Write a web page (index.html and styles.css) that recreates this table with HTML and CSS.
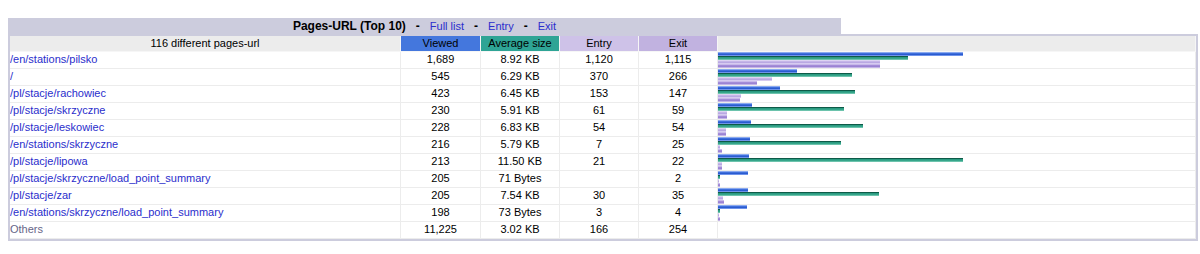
FILE: index.html
```html
<!DOCTYPE html>
<html>
<head>
<meta charset="utf-8">
<title>Pages-URL (Top 10)</title>
<link rel="stylesheet" href="styles.css">
</head>
<body>
<div class="stats">
  <div class="title-row">
    <div class="title">
      <span>Pages-URL (Top 10)</span>
      <span class="sep">-</span>
      <a href="#">Full list</a>
      <span class="sep">-</span>
      <a href="#">Entry</a>
      <span class="sep">-</span>
      <a href="#">Exit</a>
    </div>
    <div class="blank"></div>
  </div>
  <div class="frame">
    <div class="row head">
      <div class="cell h-first">116 different pages-url</div>
      <div class="cell h-p">Viewed</div>
      <div class="cell h-k">Average size</div>
      <div class="cell h-e">Entry</div>
      <div class="cell h-x">Exit</div>
      <div class="cell h-bar"></div>
    </div>

    <div class="row">
      <div class="cell url"><a href="#">/en/stations/pilsko</a></div>
      <div class="cell">1,689</div><div class="cell">8.92 KB</div><div class="cell">1,120</div><div class="cell">1,115</div>
      <div class="cell bars"><div class="bar p" style="width:245px"></div><div class="bar k" style="width:190px"></div><div class="bar e" style="width:162px"></div><div class="bar x" style="width:162px"></div></div>
    </div>
    <div class="row">
      <div class="cell url"><a href="#">/</a></div>
      <div class="cell">545</div><div class="cell">6.29 KB</div><div class="cell">370</div><div class="cell">266</div>
      <div class="cell bars"><div class="bar p" style="width:79px"></div><div class="bar k" style="width:134px"></div><div class="bar e" style="width:54px"></div><div class="bar x" style="width:39px"></div></div>
    </div>
    <div class="row">
      <div class="cell url"><a href="#">/pl/stacje/rachowiec</a></div>
      <div class="cell">423</div><div class="cell">6.45 KB</div><div class="cell">153</div><div class="cell">147</div>
      <div class="cell bars"><div class="bar p" style="width:62px"></div><div class="bar k" style="width:137px"></div><div class="bar e" style="width:23px"></div><div class="bar x" style="width:22px"></div></div>
    </div>
    <div class="row">
      <div class="cell url"><a href="#">/pl/stacje/skrzyczne</a></div>
      <div class="cell">230</div><div class="cell">5.91 KB</div><div class="cell">61</div><div class="cell">59</div>
      <div class="cell bars"><div class="bar p" style="width:34px"></div><div class="bar k" style="width:126px"></div><div class="bar e" style="width:9px"></div><div class="bar x" style="width:9px"></div></div>
    </div>
    <div class="row">
      <div class="cell url"><a href="#">/pl/stacje/leskowiec</a></div>
      <div class="cell">228</div><div class="cell">6.83 KB</div><div class="cell">54</div><div class="cell">54</div>
      <div class="cell bars"><div class="bar p" style="width:33px"></div><div class="bar k" style="width:145px"></div><div class="bar e" style="width:8px"></div><div class="bar x" style="width:8px"></div></div>
    </div>
    <div class="row">
      <div class="cell url"><a href="#">/en/stations/skrzyczne</a></div>
      <div class="cell">216</div><div class="cell">5.79 KB</div><div class="cell">7</div><div class="cell">25</div>
      <div class="cell bars"><div class="bar p" style="width:32px"></div><div class="bar k" style="width:123px"></div><div class="bar e" style="width:2px"></div><div class="bar x" style="width:4px"></div></div>
    </div>
    <div class="row">
      <div class="cell url"><a href="#">/pl/stacje/lipowa</a></div>
      <div class="cell">213</div><div class="cell">11.50 KB</div><div class="cell">21</div><div class="cell">22</div>
      <div class="cell bars"><div class="bar p" style="width:31px"></div><div class="bar k" style="width:245px"></div><div class="bar e" style="width:4px"></div><div class="bar x" style="width:4px"></div></div>
    </div>
    <div class="row">
      <div class="cell url"><a href="#">/pl/stacje/skrzyczne/load_point_summary</a></div>
      <div class="cell">205</div><div class="cell">71 Bytes</div><div class="cell"></div><div class="cell">2</div>
      <div class="cell bars"><div class="bar p" style="width:30px"></div><div class="bar k" style="width:2px"></div><div class="bar e" style="width:1px"></div><div class="bar x" style="width:2px"></div></div>
    </div>
    <div class="row">
      <div class="cell url"><a href="#">/pl/stacje/zar</a></div>
      <div class="cell">205</div><div class="cell">7.54 KB</div><div class="cell">30</div><div class="cell">35</div>
      <div class="cell bars"><div class="bar p" style="width:30px"></div><div class="bar k" style="width:161px"></div><div class="bar e" style="width:5px"></div><div class="bar x" style="width:6px"></div></div>
    </div>
    <div class="row">
      <div class="cell url"><a href="#">/en/stations/skrzyczne/load_point_summary</a></div>
      <div class="cell">198</div><div class="cell">73 Bytes</div><div class="cell">3</div><div class="cell">4</div>
      <div class="cell bars"><div class="bar p" style="width:29px"></div><div class="bar k" style="width:2px"></div><div class="bar e" style="width:1px"></div><div class="bar x" style="width:2px"></div></div>
    </div>
    <div class="row">
      <div class="cell url others">Others</div>
      <div class="cell">11,225</div><div class="cell">3.02 KB</div><div class="cell">166</div><div class="cell">254</div>
      <div class="cell bars"></div>
    </div>
  </div>
</div>
</body>
</html>
```

FILE: styles.css
```css
html, body {
  margin: 0;
  background: #ffffff;
}

body {
  padding: 18px 2px 0 8px;
  font: 11px "Liberation Sans", Arial, sans-serif;
  color: #000000;
}

a {
  color: #2a2ecc;
  text-decoration: none;
}

.title-row {
  display: flex;
  height: 16px;
}

.title {
  width: 833px;
  background: #ccccdd;
  display: flex;
  justify-content: center;
  align-items: center;
  gap: 10px;
  font-size: 12px;
  font-weight: bold;
  line-height: 16px;
}

.title a {
  font-size: 11px;
  font-weight: normal;
}

.title .sep {
  font-size: 12px;
}

.blank {
  flex: 1;
  background: #ffffff;
}

.frame {
  background: #ccccdd;
  padding: 2px;
}

.row {
  display: grid;
  grid-template-columns: 391px 80px 79px 79px 79px 1fr;
}

.cell {
  box-sizing: border-box;
  height: 17px;
  line-height: 15px;
  background: #ffffff;
  border-right: 1px solid #ececec;
  border-bottom: 1px solid #ececec;
  text-align: center;
  white-space: nowrap;
  overflow: hidden;
}

.head .cell {
  height: 16px;
  line-height: 15px;
  border-color: #f6f6f6;
}

.h-first, .h-bar { background: #ececec; }
.h-p { background: #4477dd; }
.h-k { background: #2ea495; }
.h-e { background: #cec2e8; }
.h-x { background: #c1b2e0; }

.url {
  text-align: left;
}

.others {
  color: #666688;
}

.bars {
  display: flex;
  flex-direction: column;
  align-items: flex-start;
}

.bar {
  height: 4px;
  flex: none;
}

.bar.p {
  background: linear-gradient(to bottom, #89a9f0 0 1px, #3f6fdc 1px 2px, #2a5bd0 2px 3px, #6f93ea 3px 4px);
}

.bar.k {
  background: linear-gradient(to bottom, #0e5a48 0 1px, #2a9a80 1px 2px, #36a58a 2px 3px, #6cc3ac 3px 4px);
}

.bar.e {
  background: linear-gradient(to bottom, #ddd3f2 0 1px, #c5b6e8 1px 2px, #b9a8e2 2px 3px, #d6cbf0 3px 4px);
}

.bar.x {
  background: linear-gradient(to bottom, #c8b9ea 0 1px, #a48cd8 1px 2px, #9a83d3 2px 3px, #c4b4e8 3px 4px);
}
```
